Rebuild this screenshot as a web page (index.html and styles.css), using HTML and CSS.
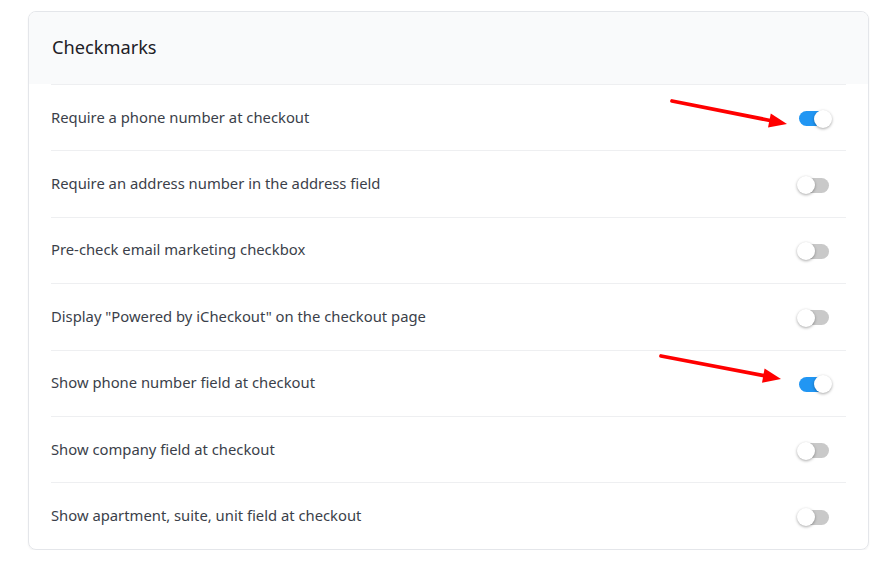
FILE: index.html
```html
<!DOCTYPE html>
<html lang="en">
<head>
    <meta charset="UTF-8">
    <meta name="viewport" content="width=device-width, initial-scale=1.0">
    <title>Checkmarks</title>
    <link rel="stylesheet" href="styles.css">
</head>
<body>

    <div class="card">
        <div class="card-header">
            <h2>Checkmarks</h2>
        </div>

        <ul class="settings">
            <li class="setting">
                <span>Require a phone number at checkout</span>
                <label class="switch"><input type="checkbox" checked><span class="slider"></span></label>
            </li>
            <li class="setting">
                <span>Require an address number in the address field</span>
                <label class="switch"><input type="checkbox"><span class="slider"></span></label>
            </li>
            <li class="setting">
                <span>Pre-check email marketing checkbox</span>
                <label class="switch"><input type="checkbox"><span class="slider"></span></label>
            </li>
            <li class="setting">
                <span>Display "Powered by iCheckout" on the checkout page</span>
                <label class="switch"><input type="checkbox"><span class="slider"></span></label>
            </li>
            <li class="setting">
                <span>Show phone number field at checkout</span>
                <label class="switch"><input type="checkbox" checked><span class="slider"></span></label>
            </li>
            <li class="setting">
                <span>Show company field at checkout</span>
                <label class="switch"><input type="checkbox"><span class="slider"></span></label>
            </li>
            <li class="setting">
                <span>Show apartment, suite, unit field at checkout</span>
                <label class="switch"><input type="checkbox"><span class="slider"></span></label>
            </li>
        </ul>

        <!-- Markierungen -->
        <svg class="arrows" width="841" height="538" viewBox="0 0 841 538">
            <g fill="#ff0000" stroke="#ff0000">
                <line x1="643" y1="89" x2="741" y2="108.5" stroke-width="3.8" stroke-linecap="round"/>
                <polygon points="758,112 739,115.6 741.8,101.4" stroke="none"/>
                <line x1="632" y1="344" x2="735" y2="363.6" stroke-width="3.8" stroke-linecap="round"/>
                <polygon points="752,367 733,370.7 735.6,356.5" stroke="none"/>
            </g>
        </svg>
    </div>

</body>
</html>
```

FILE: styles.css
```css
:root {
    --rand: #e4e6ea;
    --linie: #eeeff1;
    --kopf: #f9fafb;
    --text: #3b3f4a;
    --titel: #1d2026;
    --blau: #2196f3;
    --grau: #c9c9c9;
}

body {
    margin: 0;
    padding: 11px 11px 0 28px;
    font-family: "Noto Sans", "Open Sans", sans-serif;
    color: var(--text);
    background: #fff;
}

.card {
    position: relative;
    width: 839px;
    border: 1px solid var(--rand);
    border-radius: 8px;
    box-shadow: 0 1px 2px rgba(0, 0, 0, 0.06);
    overflow: hidden;
}

.card-header {
    height: 72px;
    background-color: var(--kopf);
    display: flex;
    align-items: center;
    padding: 0 23px;
}

.card-header h2 {
    margin: 0 0 2px;
    font-size: 18.2px;
    font-weight: 400;
    color: var(--titel);
}

.settings {
    list-style: none;
    margin: 0 22px 0 22px;
    padding: 0;
}

.setting {
    height: 66.4px;
    border-top: 1px solid var(--linie);
    display: flex;
    align-items: center;
    justify-content: space-between;
    font-size: 14.8px;
    padding-bottom: 2px;
    box-sizing: border-box;
}

.switch {
    position: relative;
    width: 30px;
    height: 15px;
    margin-right: 17px;
    margin-top: 4px;
}

.switch input {
    display: none;
}

.slider {
    position: absolute;
    inset: 0;
    border-radius: 8px;
    background-color: var(--grau);
}

.slider::before {
    content: "";
    position: absolute;
    width: 18px;
    height: 18px;
    top: -1.5px;
    left: -2px;
    border-radius: 50%;
    background-color: #fff;
    box-shadow: 0 1px 3px rgba(0, 0, 0, 0.35);
}

.switch input:checked + .slider {
    background-color: var(--blau);
}

.switch input:checked + .slider::before {
    left: 15px;
}

.arrows {
    position: absolute;
    left: 0;
    top: 0;
    pointer-events: none;
}
```
